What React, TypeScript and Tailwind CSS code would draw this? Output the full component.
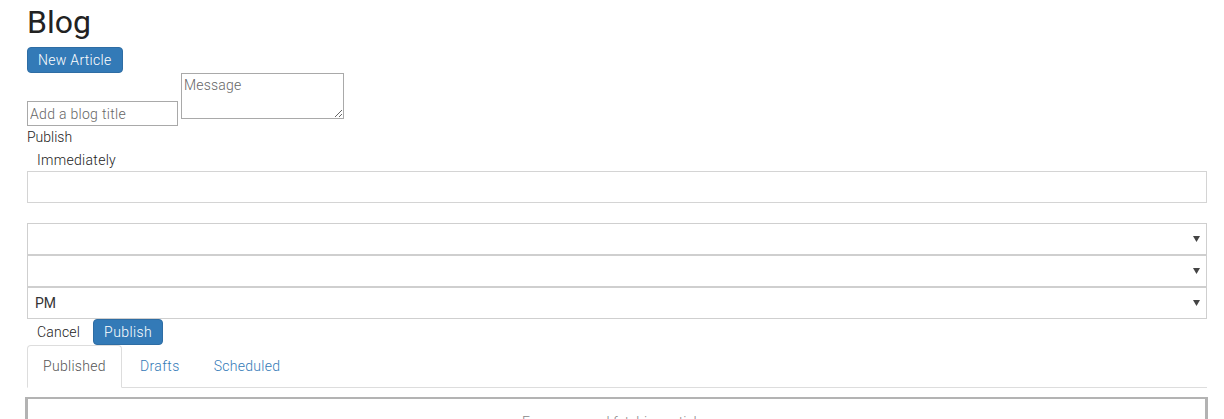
import React from "react";

function Arrow() {
  return (
    <svg width="7" height="6" viewBox="0 0 7 6" className="shrink-0">
      <path d="M0 0 L7 0 L3.5 6 Z" fill="#444" />
    </svg>
  );
}

function SelectBox({ value }: { value?: string }) {
  return (
    <div className="flex h-[32px] items-center justify-between border border-[#cfcfcf] bg-white pl-[7px] pr-[6px] text-[14px] text-[#333]">
      <span>{value ?? ""}</span>
      <Arrow />
    </div>
  );
}

export default function App() {
  return (
    <div className="min-h-[419px] bg-white pl-[27px] pr-[17px] font-['Roboto',_'Liberation_Sans',_sans-serif] text-[14px] leading-[20px] text-[#333]">
      <h1 className="pt-[5px] text-[32px] leading-[35px] font-normal text-[#222]">Blog</h1>
      <div className="mt-[7px]">
        <button className="h-[26px] rounded-[4px] border border-[#2e6da4] bg-[#337ab7] px-[10px] text-[14px] font-light leading-[20px] tracking-[0.3px] text-white">
          New Article
        </button>
      </div>
      <div className="flex items-start gap-[3px]">
        <input
          placeholder="Add a blog title"
          className="mt-[28px] h-[25px] w-[151px] border border-[#a9a9a9] px-[2px] text-[14px] font-light tracking-[0.3px] placeholder:text-[#666] outline-none"
        />
        <textarea
          placeholder="Message"
          className="h-[46px] w-[163px] border border-[#a9a9a9] px-[2px] py-[2px] text-[14px] font-light leading-[18px] tracking-[0.2px] placeholder:text-[#666] outline-none"
        />
      </div>
      <div className="mt-[1px] font-light text-[#222]">Publish</div>
      <div className="mt-[3px] pl-[10px] font-light tracking-[0.3px] text-[#222]">Immediately</div>
      <div className="mt-[1px] h-[32px] border border-[#d4d4d4]" />
      <div className="mt-[20px] flex flex-col">
        <SelectBox />
        <SelectBox />
        <SelectBox value="PM" />
      </div>
      <div className="flex items-center gap-[3px]">
        <button className="h-[26px] px-[10px] text-[14px] font-light tracking-[0.2px] text-[#222]">Cancel</button>
        <button className="h-[26px] rounded-[4px] border border-[#2e6da4] bg-[#337ab7] px-[10px] text-[14px] font-light tracking-[0.4px] text-white">
          Publish
        </button>
      </div>
      <div className="flex border-b border-[#ddd]">
        <div className="-mb-[1px] mr-[2px] rounded-t-[4px] border border-[#ddd] border-b-white bg-white px-[15px] py-[10px] font-light tracking-[0.3px] text-[#555]">
          Published
        </div>
        <div className="mr-[2px] border border-transparent px-[15px] py-[10px] font-light tracking-[0.4px] text-[#337ab7]">
          Drafts
        </div>
        <div className="mr-[2px] border border-transparent px-[15px] py-[10px] font-light tracking-[0.3px] text-[#337ab7]">
          Scheduled
        </div>
      </div>
      <div className="mt-[9px] -ml-[2px] -mr-[1px] h-[60px] border-[2px] border-[#b3b3b3] border-l-[3px] border-r-[3px] pt-[13px] text-center font-light text-[#888]">
        Error occurred fetching articles
      </div>
    </div>
  );
}
